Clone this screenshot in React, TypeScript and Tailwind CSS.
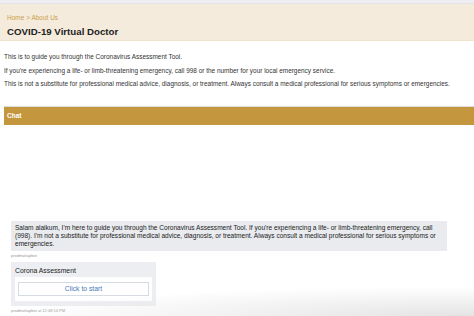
import React from "react";

export default function App() {
  return (
    <div className="relative w-[474px] h-[316px] overflow-hidden bg-white font-['Liberation_Sans',Arial,sans-serif] text-[#222]">
      <div className="h-[4px] bg-[#eeeef2] border-b border-[#e2e2e8]" />
      <div className="h-[37px] bg-[#f4ebdc] border-b border-[#efe3cc] pl-[7px] pt-[10px]">
        <div className="text-[6.5px] leading-[8px] text-[#c9a04a]">Home &gt; About Us</div>
        <div className="mt-[3px] text-[9.7px] leading-[13px] font-bold text-[#222]">COVID-19 Virtual Doctor</div>
      </div>
      <div className="pl-[4px] pt-[12px] text-[6.45px] leading-[8px] text-[#333]">
        <p>This is to guide you through the Coronavirus Assessment Tool.</p>
        <p className="mt-[5.5px]">If you're experiencing a life- or limb-threatening emergency, call 998 or the number for your local emergency service.</p>
        <p className="mt-[5.5px]">This is not a substitute for professional medical advice, diagnosis, or treatment. Always consult a medical professional for serious symptoms or emergencies.</p>
      </div>
      <div className="ml-[4px] mt-[18px] border-t border-[#ddd]">
        <div className="h-[18px] bg-[#c4973f] pl-[3px] flex items-center text-[6.5px] font-bold text-white">Chat</div>
      </div>
      <div className="pl-[11px] pt-[96px]">
        <div className="w-[436px] bg-[#e9ebef] pl-[4px] pr-[10px] py-[3px] text-[6.55px] leading-[8px] text-[#222]">
          Salam alaikum, I'm here to guide you through the Coronavirus Assessment Tool. If you're experiencing a life- or limb-threatening emergency, call (998). I'm not a substitute for professional medical advice, diagnosis, or treatment. Always consult a medical professional for serious symptoms or emergencies.
        </div>
        <div className="mt-[1px] text-[4px] leading-[8px] text-[#999]">prodmahapbot</div>
        <div className="mt-[2px] w-[145px] bg-[#eceef1] px-[4px] pt-[3px] pb-[5px]">
          <div className="text-[6.8px] leading-[11px] text-[#222]">Corona Assessment</div>
          <div className="mt-[1px] bg-white px-[3px] py-[5px]">
            <div className="h-[14px] border border-[#d6dbe2] flex items-center justify-center text-[6.8px] text-[#4a78b8]">Click to start</div>
          </div>
        </div>
        <div className="mt-[1px] text-[4px] leading-[7px] text-[#999]">prodmahapbot at 12:48:14 PM</div>
      </div>
      <div className="absolute left-0 right-0 bottom-0 h-[30px] bg-[radial-gradient(ellipse_at_bottom_right,#e4e4e4,rgba(255,255,255,0)_70%)] pointer-events-none" />
    </div>
  );
}
